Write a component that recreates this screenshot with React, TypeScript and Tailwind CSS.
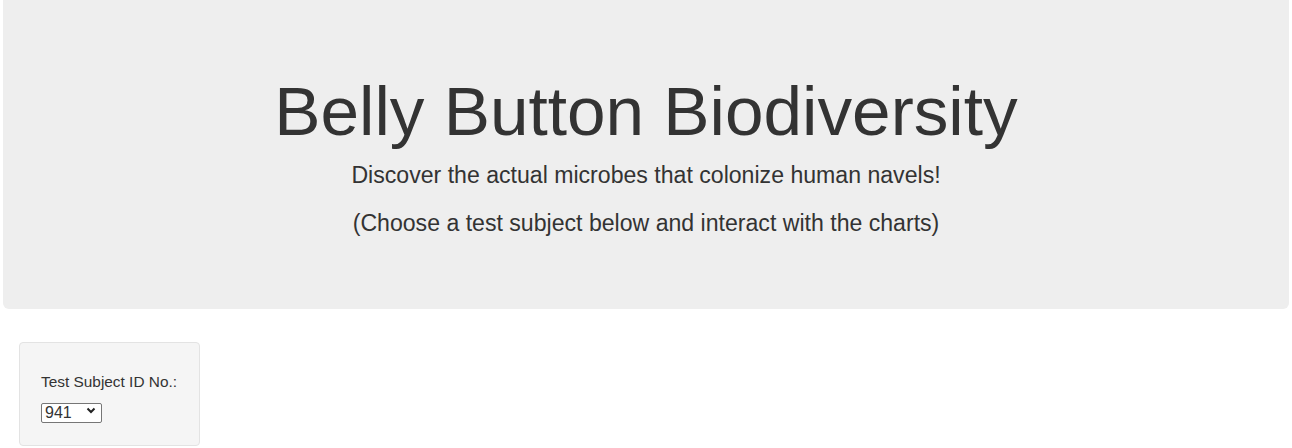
import React from "react";

export default function App() {
  return (
    <div className="w-[1292px] h-[448px] overflow-hidden bg-white text-[#333333]" style={{ fontFamily: '"Liberation Sans", Arial, sans-serif' }}>
      <div className="mx-[3px] bg-[#eeeeee] rounded-b-[6px] pt-[73px] pb-[69px] text-center">
        <h1 className="text-[69.3px] leading-[76px] font-normal">Belly Button Biodiversity</h1>
        <p className="mt-[10px] text-[23.1px] leading-[33px]">Discover the actual microbes that colonize human navels!</p>
        <p className="mt-[15px] text-[23.1px] leading-[33px]">(Choose a test subject below and interact with the charts)</p>
      </div>
      <div className="ml-[19px] mt-[33px] w-[181px] h-[104px] bg-[#f5f5f5] border border-[#e3e3e3] rounded-[4px] px-[21px] pt-[28px]">
        <div className="text-[15.4px] leading-[22px]">Test Subject ID No.:</div>
        <div className="relative mt-[8px] w-[61px] h-[20px]">
          <select
            defaultValue="941"
            className="appearance-none w-[61px] h-[20px] border border-[#767676] rounded-[2px] bg-white pl-[3px] text-[16px] leading-[18px] text-[#333333] outline-none"
          >
            <option value="940">940</option>
            <option value="941">941</option>
            <option value="943">943</option>
          </select>
          <svg className="pointer-events-none absolute left-[45px] top-[6px]" width="10" height="7" viewBox="0 0 10 7">
            <path d="M1.5 1.5 L5 5 L8.5 1.5" fill="none" stroke="#222" strokeWidth="2" />
          </svg>
        </div>
      </div>
    </div>
  );
}
